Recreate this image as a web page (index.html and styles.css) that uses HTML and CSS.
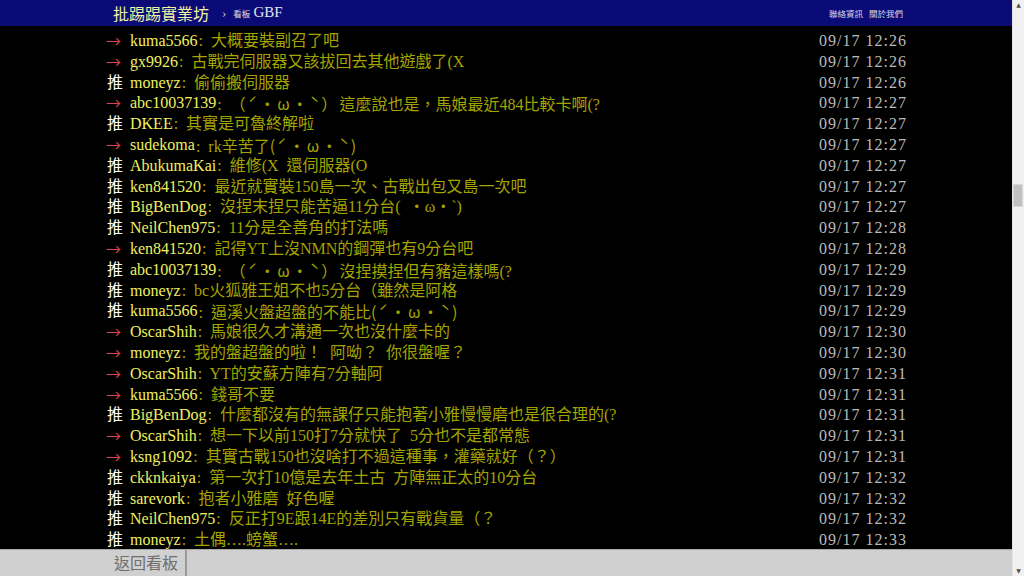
FILE: index.html
```html
<!DOCTYPE html>
<html lang="zh-Hant">
<head>
<meta charset="utf-8">
<title>批踢踢實業坊 › 看板 GBF</title>
<link rel="stylesheet" href="styles.css">
</head>
<body>
<div class="page">
  <div class="main">
    <header class="topbar">
      <div class="wrap topbar-inner">
        <a class="logo">批踢踢實業坊</a>
        <span class="sep">›</span>
        <span class="board-label">看板</span>
        <span class="board-name">GBF</span>
        <nav class="links">
          <a>聯絡資訊</a>
          <a>關於我們</a>
        </nav>
      </div>
    </header>

    <section class="content">
      <div class="wrap pushes">
        <div class="push"><span class="tag arrow">→</span><span class="uid">kuma5566</span><span class="txt">: 大概要裝副召了吧</span><span class="time">09/17 12:26</span></div>
        <div class="push"><span class="tag arrow">→</span><span class="uid">gx9926</span><span class="txt">: 古戰完伺服器又該拔回去其他遊戲了(X</span><span class="time">09/17 12:26</span></div>
        <div class="push"><span class="tag">推</span><span class="uid">moneyz</span><span class="txt">: 偷偷搬伺服器</span><span class="time">09/17 12:26</span></div>
        <div class="push"><span class="tag arrow">→</span><span class="uid">abc10037139</span><span class="txt">: <span class="kao">（ˊ・ω・ˋ）</span>這麼說也是，馬娘最近484比較卡啊(?</span><span class="time">09/17 12:27</span></div>
        <div class="push"><span class="tag">推</span><span class="uid">DKEE</span><span class="txt">: 其實是可魯終解啦</span><span class="time">09/17 12:27</span></div>
        <div class="push"><span class="tag arrow">→</span><span class="uid">sudekoma</span><span class="txt">: rk辛苦了<span class="kao">(ˊ・ω・ˋ)</span></span><span class="time">09/17 12:27</span></div>
        <div class="push"><span class="tag">推</span><span class="uid">AbukumaKai</span><span class="txt">: 維修(X 還伺服器(O</span><span class="time">09/17 12:27</span></div>
        <div class="push"><span class="tag">推</span><span class="uid">ken841520</span><span class="txt">: 最近就實裝150島一次、古戰出包又島一次吧</span><span class="time">09/17 12:27</span></div>
        <div class="push"><span class="tag">推</span><span class="uid">BigBenDog</span><span class="txt">: 沒捏末捏只能苦逼11分台( ・ω・`)</span><span class="time">09/17 12:27</span></div>
        <div class="push"><span class="tag">推</span><span class="uid">NeilChen975</span><span class="txt">: 11分是全善角的打法嗎</span><span class="time">09/17 12:28</span></div>
        <div class="push"><span class="tag arrow">→</span><span class="uid">ken841520</span><span class="txt">: 記得YT上沒NMN的鋼彈也有9分台吧</span><span class="time">09/17 12:28</span></div>
        <div class="push"><span class="tag">推</span><span class="uid">abc10037139</span><span class="txt">: <span class="kao">（ˊ・ω・ˋ）</span>沒捏摸捏但有豬這樣嗎(?</span><span class="time">09/17 12:29</span></div>
        <div class="push"><span class="tag">推</span><span class="uid">moneyz</span><span class="txt">: bc火狐雅王姐不也5分台（雖然是阿格</span><span class="time">09/17 12:29</span></div>
        <div class="push"><span class="tag">推</span><span class="uid">kuma5566</span><span class="txt">: 逼溪火盤超盤的不能比<span class="kao">(ˊ・ω・ˋ)</span></span><span class="time">09/17 12:29</span></div>
        <div class="push"><span class="tag arrow">→</span><span class="uid">OscarShih</span><span class="txt">: 馬娘很久才溝通一次也沒什麼卡的</span><span class="time">09/17 12:30</span></div>
        <div class="push"><span class="tag arrow">→</span><span class="uid">moneyz</span><span class="txt">: 我的盤超盤的啦！ 阿呦？ 你很盤喔？</span><span class="time">09/17 12:30</span></div>
        <div class="push"><span class="tag arrow">→</span><span class="uid">OscarShih</span><span class="txt">: YT的安蘇方陣有7分軸阿</span><span class="time">09/17 12:31</span></div>
        <div class="push"><span class="tag arrow">→</span><span class="uid">kuma5566</span><span class="txt">: 錢哥不要</span><span class="time">09/17 12:31</span></div>
        <div class="push"><span class="tag">推</span><span class="uid">BigBenDog</span><span class="txt">: 什麼都沒有的無課仔只能抱著小雅慢慢磨也是很合理的(?</span><span class="time">09/17 12:31</span></div>
        <div class="push"><span class="tag arrow">→</span><span class="uid">OscarShih</span><span class="txt">: 想一下以前150打7分就快了 5分也不是都常態</span><span class="time">09/17 12:31</span></div>
        <div class="push"><span class="tag arrow">→</span><span class="uid">ksng1092</span><span class="txt">: 其實古戰150也沒啥打不過這種事，灌藥就好（？）</span><span class="time">09/17 12:31</span></div>
        <div class="push"><span class="tag">推</span><span class="uid">ckknkaiya</span><span class="txt">: 第一次打10億是去年土古 方陣無正太的10分台</span><span class="time">09/17 12:32</span></div>
        <div class="push"><span class="tag">推</span><span class="uid">sarevork</span><span class="txt">: 抱者小雅磨 好色喔</span><span class="time">09/17 12:32</span></div>
        <div class="push"><span class="tag">推</span><span class="uid">NeilChen975</span><span class="txt">: 反正打9E跟14E的差別只有戰貨量（？</span><span class="time">09/17 12:32</span></div>
        <div class="push"><span class="tag">推</span><span class="uid">moneyz</span><span class="txt">: 土偶….螃蟹….</span><span class="time">09/17 12:33</span></div>
      </div>
    </section>

    <footer class="navbar">
      <div class="wrap navbar-inner">
        <a class="back">返回看板</a>
        <div class="nav-rest"></div>
      </div>
    </footer>
  </div>

  <div class="scrollbar">
    <span class="sb-arrow">▲</span>
    <div class="sb-track"><div class="sb-thumb"></div></div>
    <span class="sb-arrow">▼</span>
  </div>
</div>
</body>
</html>
```

FILE: styles.css
```css
html, body {
  margin: 0;
  padding: 0;
  height: 576px;
  overflow: hidden;
  background: #000;
}

.page {
  display: flex;
  height: 576px;
}

.main {
  flex: 1;
  display: flex;
  flex-direction: column;
  min-width: 0;
  background: #000;
}

.wrap {
  width: 800px;
  margin: 0 auto;
}

/* top bar */
.topbar {
  height: 26px;
  background: #0b0b78;
  flex: none;
}

.topbar-inner {
  display: flex;
  align-items: center;
  height: 26px;
  box-sizing: border-box;
  padding: 0 3px 1px 7px;
}

.logo {
  font-family: "Liberation Serif", "Noto Sans CJK TC", serif;
  font-size: 16px;
  color: #f2f2a0;
}

.sep {
  font-family: "Liberation Serif", serif;
  color: #c8c8d8;
  font-size: 13px;
  margin: 0 7px 0 13px;
}

.board-label {
  font-family: "Noto Sans CJK TC", sans-serif;
  font-size: 8.5px;
  color: #e0e0e0;
  margin-right: 3px;
}

.board-name {
  font-family: "Liberation Serif", serif;
  font-size: 15px;
  color: #e4e4ee;
}

.links {
  margin-left: auto;
  display: flex;
  gap: 6px;
}

.links a {
  font-family: "Noto Sans CJK TC", sans-serif;
  font-size: 8.5px;
  color: #d8d8e8;
}

/* pushes */
.content {
  flex: 1;
  overflow: hidden;
  padding-top: 5px;
}

.push {
  display: flex;
  height: 20.8px;
  line-height: 20.8px;
  font-family: "Liberation Serif", "Noto Sans CJK TC", serif;
  font-size: 16px;
  white-space: pre;
}

.tag {
  width: 24px;
  flex: none;
  color: #fff;
  padding-left: 1px;
  box-sizing: border-box;
}

.tag.arrow {
  color: #d84450;
  font-family: "Noto Sans CJK TC", sans-serif;
  font-size: 15px;
  padding-left: 0;
}

.uid {
  color: #f0f060;
}

.txt {
  color: #a4a400;
  word-spacing: 4px;
  padding-left: 1px;
}

.kao {
  font-family: "Noto Sans CJK TC", sans-serif;
  word-spacing: 0;
  letter-spacing: 2px;
}

.time {
  margin-left: auto;
  color: #bbbbbb;
  letter-spacing: 1px;
  margin-right: -1px;
}

/* bottom nav */
.navbar {
  flex: none;
  height: 27px;
  background: #d0d0d0;
  border-top: 1px solid #a8a8a8;
  box-sizing: border-box;
}

.navbar-inner {
  display: flex;
  height: 100%;
}

.back {
  display: flex;
  align-items: center;
  padding: 0 7px 3px 8px;
  font-family: "Noto Sans CJK TC", sans-serif;
  font-size: 16px;
  color: #6e6e6e;
  border-right: 2px solid #9a9a9a;
}

.nav-rest {
  flex: 1;
}

/* fake scrollbar */
.scrollbar {
  width: 12px;
  flex: none;
  background: #f1f1f1;
  border-left: 1px solid #e2e2e2;
  box-sizing: border-box;
  display: flex;
  flex-direction: column;
  align-items: center;
}

.sb-arrow {
  font-family: "DejaVu Sans", sans-serif;
  font-size: 6px;
  line-height: 10px;
  height: 10px;
  color: #505050;
}

.sb-track {
  flex: 1;
  width: 100%;
  padding-top: 174px;
  box-sizing: border-box;
}

.sb-thumb {
  height: 23px;
  margin: 0 1px 0 0;
  background: #c1c1c1;
  border: 1px solid #d8d8d8;
  box-sizing: border-box;
}
```
